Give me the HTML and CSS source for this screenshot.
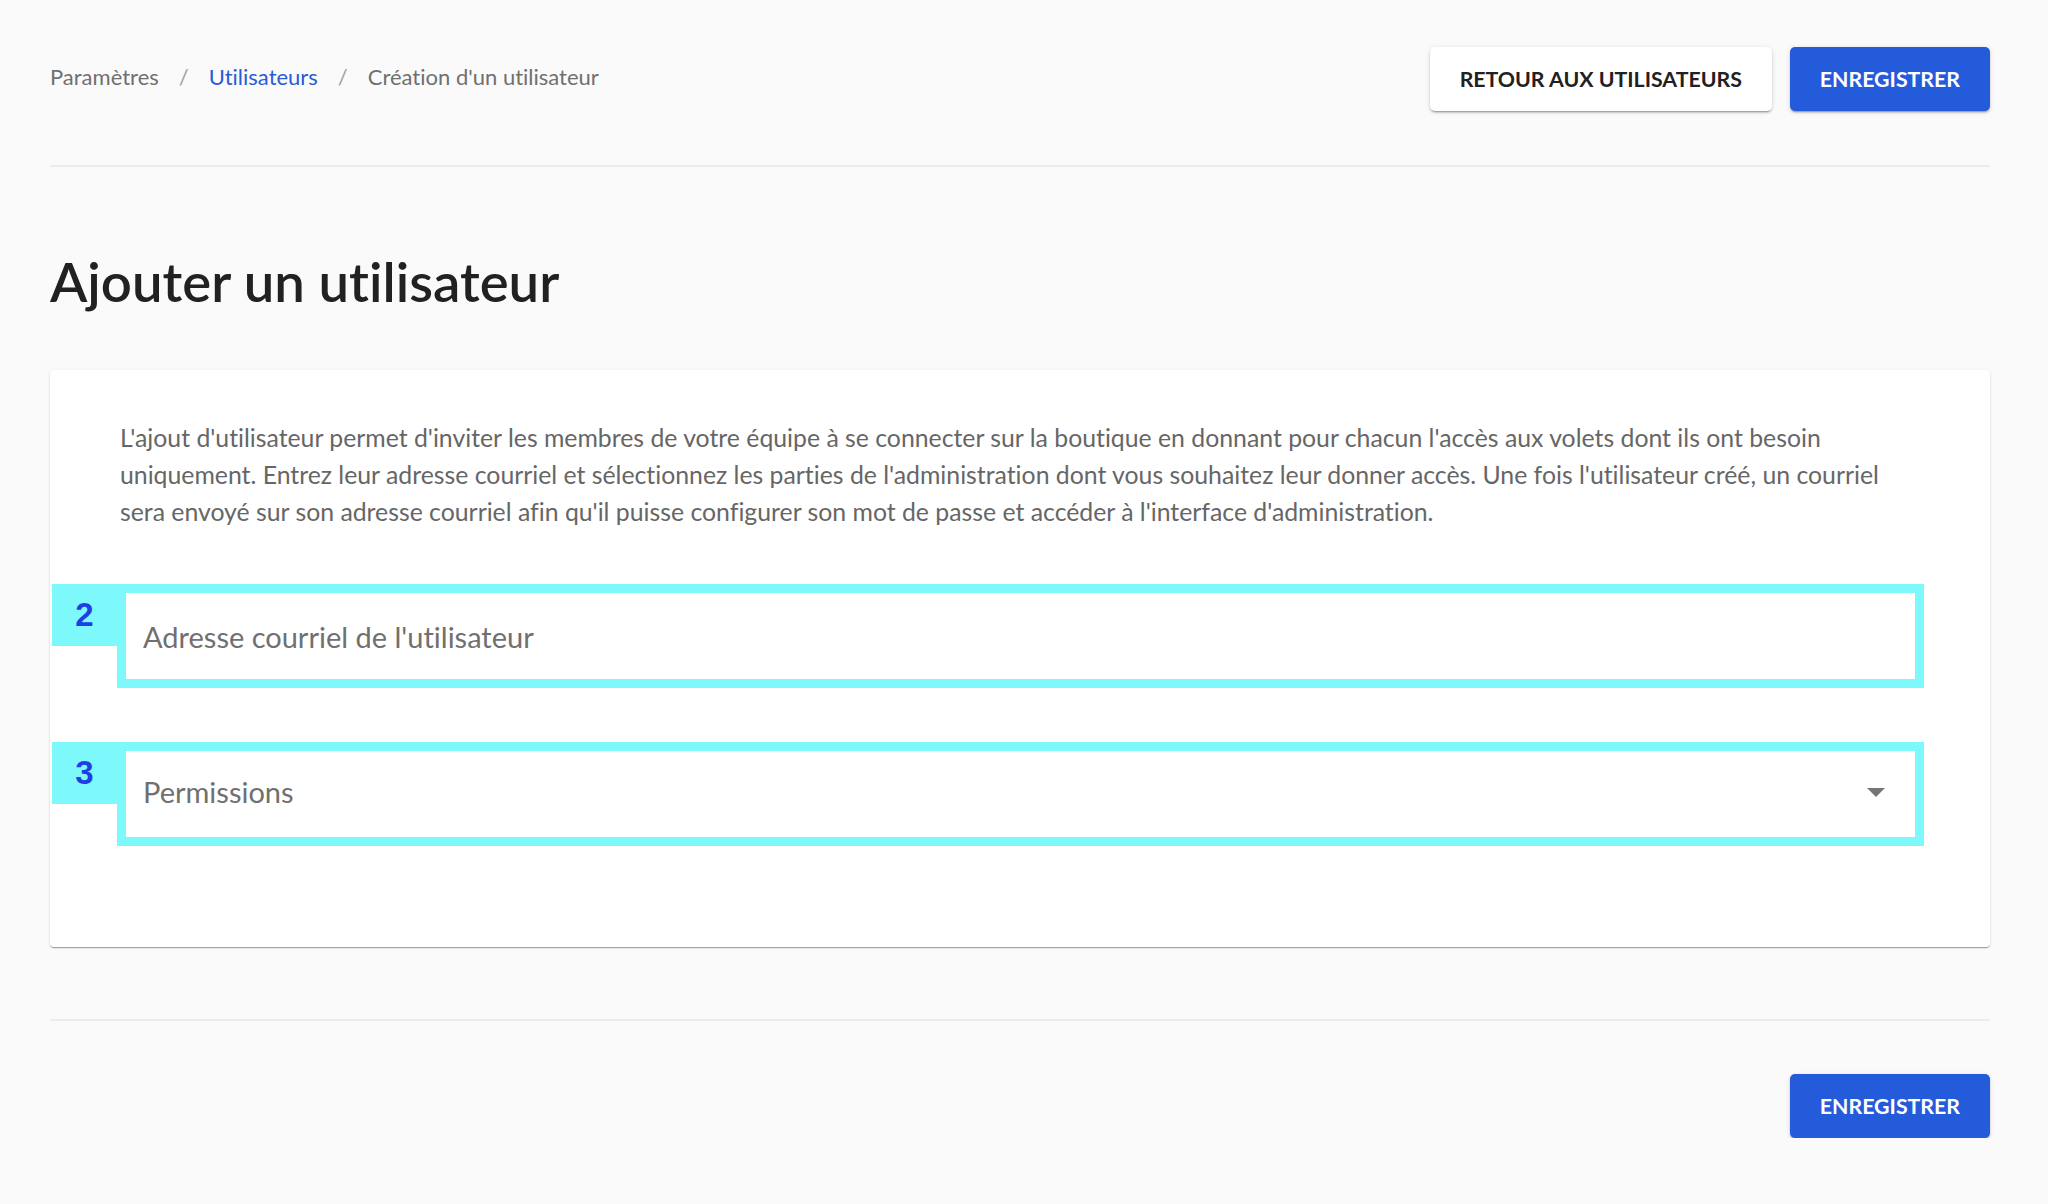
FILE: index.html
```html
<!DOCTYPE html>
<html lang="fr">
<head>
    <meta charset="UTF-8">
    <meta name="viewport" content="width=device-width, initial-scale=1.0">
    <title>Création d'un utilisateur</title>
    <link rel="stylesheet" href="styles.css">
</head>
<body>
    <div class="page">
        <header class="topbar">
            <nav class="breadcrumb">
                <span class="crumb">Paramètres</span>
                <span class="sep">/</span>
                <a class="crumb crumb-link" href="#">Utilisateurs</a>
                <span class="sep">/</span>
                <span class="crumb">Création d'un utilisateur</span>
            </nav>
            <div class="actions">
                <button class="btn btn-light">Retour aux utilisateurs</button>
                <button class="btn btn-primary">Enregistrer</button>
            </div>
        </header>

        <h1 class="page-title">Ajouter un utilisateur</h1>

        <section class="card">
            <p class="intro">L'ajout d'utilisateur permet d'inviter les membres de votre équipe à se connecter sur la boutique en donnant pour chacun l'accès aux volets dont ils ont besoin uniquement. Entrez leur adresse courriel et sélectionnez les parties de l'administration dont vous souhaitez leur donner accès. Une fois l'utilisateur créé, un courriel sera envoyé sur son adresse courriel afin qu'il puisse configurer son mot de passe et accéder à l'interface d'administration.</p>

            <div class="field-row">
                <span class="marker">2</span>
                <div class="field">
                    <input class="text-input" type="email" placeholder="Adresse courriel de l'utilisateur">
                </div>
            </div>

            <div class="field-row">
                <span class="marker">3</span>
                <div class="field">
                    <div class="select">
                        <span class="select-label">Permissions</span>
                        <!-- dropdown arrow -->
                        <svg class="select-arrow" width="18" height="9" viewBox="0 0 18 9">
                            <path d="M0 0 L18 0 L9 9 Z" fill="#757575"/>
                        </svg>
                    </div>
                </div>
            </div>
        </section>

        <footer class="bottombar">
            <button class="btn btn-primary">Enregistrer</button>
        </footer>
    </div>
</body>
</html>
```

FILE: styles.css
```css
body {
    margin: 0;
    background-color: #fafafa;
    font-family: 'Lato', 'Open Sans', sans-serif;
    font-variant-ligatures: no-common-ligatures;
    color: #212121;
}

.page {
    padding: 0 58px 0 50px;
}

/* Top bar with breadcrumb and actions */
.topbar {
    display: flex;
    justify-content: space-between;
    align-items: center;
    padding: 47px 0 54px;
    border-bottom: 2px solid #ececec;
}

.breadcrumb {
    display: flex;
    align-items: center;
    margin-bottom: 5px;
    font-size: 22px;
    color: #707070;
}

.crumb-link {
    color: #2a5bd7;
    text-decoration: none;
}

.sep {
    margin: 0 20px;
    color: #a0a0a0;
}

.actions {
    display: flex;
    gap: 18px;
}

.btn {
    height: 64px;
    padding: 0 30px;
    border: none;
    border-radius: 5px;
    font-family: 'Lato', sans-serif;
    font-size: 21.3px;
    font-weight: 700;
    text-transform: uppercase;
    cursor: pointer;
    box-shadow: 0 3px 1px -2px rgba(0, 0, 0, 0.2), 0 2px 2px 0 rgba(0, 0, 0, 0.14), 0 1px 5px 0 rgba(0, 0, 0, 0.12);
}

.btn-light {
    background-color: #fff;
    color: #212121;
}

.btn-primary {
    background-color: #245bdb;
    color: #fff;
}

.page-title {
    margin: 79px 0 54px;
    font-size: 54.5px;
    line-height: 70px;
    font-weight: 600;
    color: #212121;
}

/* Form card */
.card {
    background-color: #fff;
    border-radius: 4px;
    padding: 49px 0 101px;
    box-shadow: 0 2px 1px -1px rgba(0, 0, 0, 0.2), 0 1px 1px 0 rgba(0, 0, 0, 0.14), 0 1px 3px 0 rgba(0, 0, 0, 0.12);
}

.intro {
    margin: 0 90px 54px 70px;
    font-size: 24.8px;
    line-height: 37px;
    color: #666;
}

.field-row {
    display: flex;
    align-items: flex-start;
    margin: 0 66px 54px 2px;
}

.field-row:last-child {
    margin-bottom: 0;
}

.marker {
    width: 65px;
    height: 62px;
    display: flex;
    align-items: center;
    justify-content: center;
    background-color: #7df9fb;
    color: #1f3fe4;
    font-family: 'Liberation Sans', Arial, sans-serif;
    font-size: 33px;
    font-weight: 700;
}

.field {
    flex: 1;
    border: 9px solid #7df9fb;
    background-color: #fff;
}

.text-input {
    display: block;
    box-sizing: border-box;
    width: 100%;
    height: 86px;
    padding: 0 17px;
    border: none;
    outline: none;
    font-family: 'Lato', sans-serif;
    font-size: 29px;
    font-variant-ligatures: no-common-ligatures;
    color: #424242;
    background: transparent;
}

.text-input::placeholder {
    color: #707070;
}

.select {
    display: flex;
    align-items: center;
    justify-content: space-between;
    box-sizing: border-box;
    height: 86px;
    padding: 0 30px 5px 17px;
    font-size: 29px;
    color: #707070;
}

.select-arrow {
    display: block;
    margin-top: 2px;
}

/* Bottom bar */
.bottombar {
    display: flex;
    justify-content: flex-end;
    margin-top: 72px;
    padding-top: 53px;
    border-top: 2px solid #ececec;
}
```
